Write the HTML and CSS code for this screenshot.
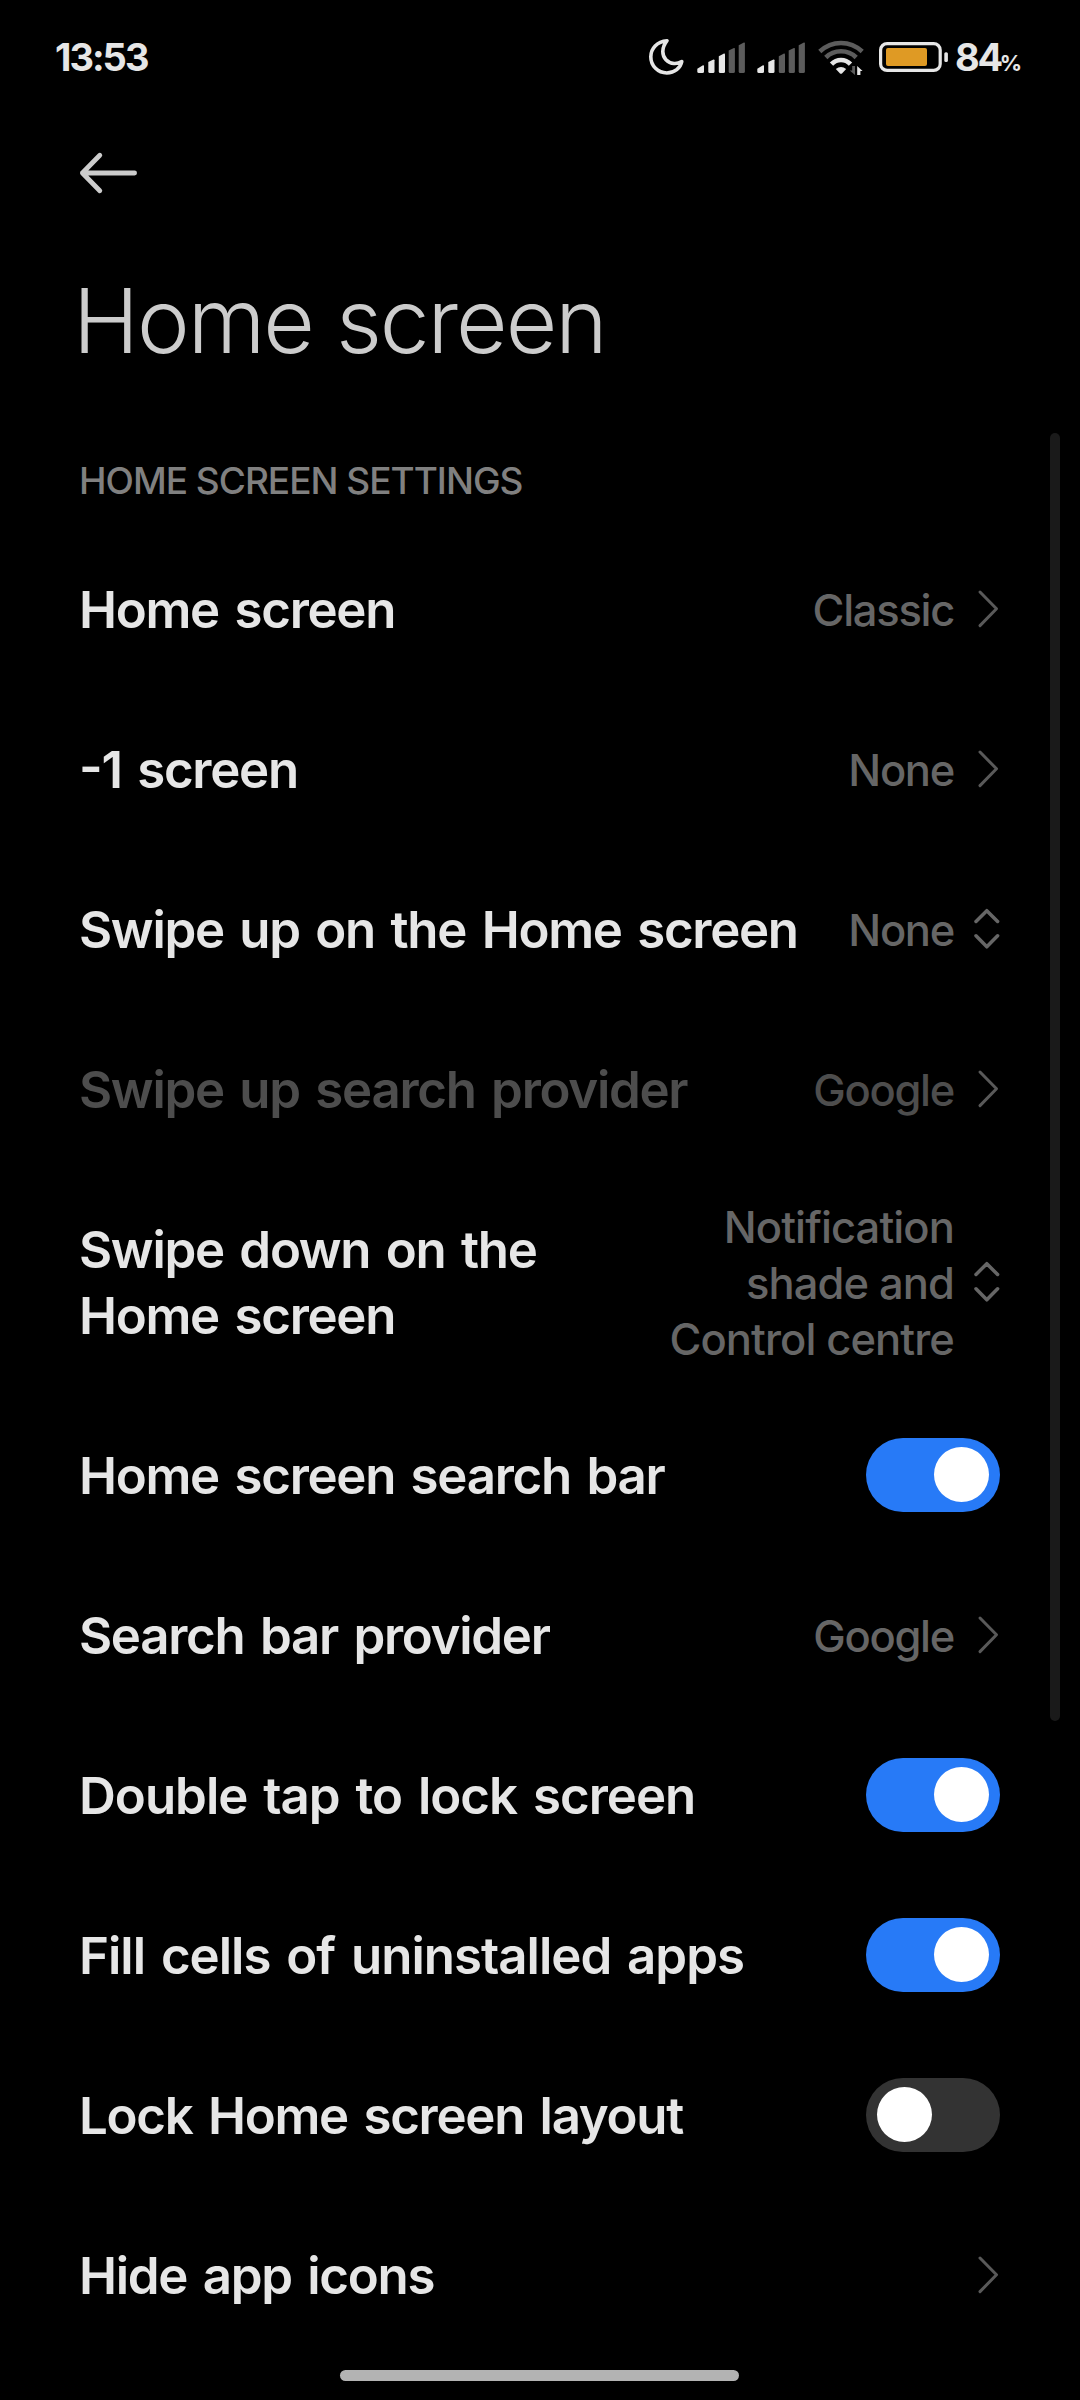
FILE: index.html
```html
<!DOCTYPE html>
<html lang="en">
<head>
    <meta charset="UTF-8">
    <meta name="viewport" content="width=device-width, initial-scale=1.0">
    <title>Home screen</title>
    <link rel="stylesheet" href="styles.css">
</head>
<body>
    <svg width="0" height="0" class="defs">
        <symbol id="chevron" viewBox="0 0 28 44">
            <path d="M8 5 L24.5 21.8 L8 38.6" fill="none" stroke="currentColor" stroke-width="3" stroke-linecap="round" stroke-linejoin="round"/>
        </symbol>
        <symbol id="updown" viewBox="0 0 28 44">
            <path d="M4 14.5 L14.8 3.7 L25.6 14.5 M4 28.8 L14.8 39.8 L25.6 28.8" fill="none" stroke="currentColor" stroke-width="3.5" stroke-linecap="round" stroke-linejoin="round"/>
        </symbol>
    </svg>

    <div class="status-bar">
        <span class="time">13:53</span>
        <!-- moon, two sims, wifi and battery -->
        <svg class="status-icons" width="304" height="40" viewBox="646 37 304 40">
            <path d="M667 40.7 C657 41.5 650.8 48.5 650.8 56.8 C650.8 66 658 73 666.8 73 C674.5 73 680.6 68 681.8 61.5 C679 63.2 676.5 63.7 674 63.5 C667.5 63 662.8 58 662.8 51.5 C662.8 47.3 664.5 44 667 40.7 Z" fill="none" stroke="#e6e6e6" stroke-width="3.6" stroke-linejoin="round"/>
            <g fill="#e6e6e6">
                <path d="M697.3 71.5 V68.8 L703 65.2 Q704 65 704 66 V71.5 Q704 73 702.5 73 H698.8 Q697.3 73 697.3 71.5 Z"/>
                <path d="M708.3 71.5 V62 L713.5 59.5 Q714.5 59.3 714.5 60.3 V71.5 Q714.5 73 713 73 H709.8 Q708.3 73 708.3 71.5 Z"/>
                <path d="M718.8 71.5 V56.2 L724 53.6 Q725 53.4 725 54.4 V71.5 Q725 73 723.5 73 H720.3 Q718.8 73 718.8 71.5 Z"/>
                <path d="M757.3 71.5 V68.8 L763 65.2 Q764 65 764 66 V71.5 Q764 73 762.5 73 H758.8 Q757.3 73 757.3 71.5 Z"/>
                <path d="M768.3 71.5 V62 L773.5 59.5 Q774.5 59.3 774.5 60.3 V71.5 Q774.5 73 773 73 H769.8 Q768.3 73 768.3 71.5 Z"/>
            </g>
            <g fill="#5c5c5c">
                <path d="M728.7 71.5 V50.6 L733.9 48 Q734.9 47.8 734.9 48.8 V71.5 Q734.9 73 733.4 73 H730.2 Q728.7 73 728.7 71.5 Z"/>
                <path d="M738.7 71.5 V45.2 L743.9 42.6 Q744.9 42.4 744.9 43.4 V71.5 Q744.9 73 743.4 73 H740.2 Q738.7 73 738.7 71.5 Z"/>
                <path d="M778.8 71.5 V56.2 L784 53.6 Q785 53.4 785 54.4 V71.5 Q785 73 783.5 73 H780.3 Q778.8 73 778.8 71.5 Z"/>
                <path d="M788.7 71.5 V50.6 L793.9 48 Q794.9 47.8 794.9 48.8 V71.5 Q794.9 73 793.4 73 H790.2 Q788.7 73 788.7 71.5 Z"/>
                <path d="M798.7 71.5 V45.2 L803.9 42.6 Q804.9 42.4 804.9 43.4 V71.5 Q804.9 73 803.4 73 H800.2 Q798.7 73 798.7 71.5 Z"/>
            </g>
            <g fill="none" stroke-width="4.6">
                <path d="M819.8 51.5 Q829 43 841 43 Q853 43 862.2 51.5" stroke="#5c5c5c"/>
                <path d="M825.8 57.5 Q832 51.3 841 51.3 Q850 51.3 856.2 57.5" stroke="#5c5c5c"/>
                <path d="M831.5 64.2 Q835.5 60 841 60 Q846.5 60 850.5 64.2" stroke="#e6e6e6"/>
            </g>
            <path d="M835.8 69 Q841 65 846.2 69 L842 73.4 Q841 74.3 840 73.4 Z" fill="#e6e6e6"/>
            <path d="M855 66 V75 L849.8 70.5 H852.2 V66 Z" fill="#5c5c5c"/>
            <path d="M857.2 75 V66 L862.6 71 H860.4 V75 Z" fill="#e6e6e6"/>
            <rect x="880.6" y="43.6" width="59.6" height="26.8" rx="6.5" fill="none" stroke="#e6e6e6" stroke-width="3.2"/>
            <rect x="886" y="48" width="41" height="18" rx="2" fill="#df9a24"/>
            <rect x="944.3" y="52.3" width="3.6" height="9.8" rx="1.5" fill="#e6e6e6"/>
        </svg>
        <span class="battery-level">84<span class="percent">%</span></span>
    </div>

    <div class="header">
        <svg width="62" height="44" viewBox="78 151.5 62 44">
            <path d="M99.8 155.8 L82.4 173.5 L99.8 191.2 M82.4 173.5 H134.6" fill="none" stroke="#cccccc" stroke-width="4.8" stroke-linecap="round" stroke-linejoin="round"/>
        </svg>
    </div>

    <h1>Home screen</h1>
    <h2>HOME SCREEN SETTINGS</h2>

    <div class="list">
        <div class="row">
            <span class="label">Home screen</span>
            <span class="value">Classic</span>
            <svg class="icon"><use href="#chevron"/></svg>
        </div>
        <div class="row">
            <span class="label minus">-1 screen</span>
            <span class="value">None</span>
            <svg class="icon"><use href="#chevron"/></svg>
        </div>
        <div class="row">
            <span class="label">Swipe up on the Home screen</span>
            <span class="value">None</span>
            <svg class="icon updown"><use href="#updown"/></svg>
        </div>
        <div class="row disabled">
            <span class="label">Swipe up search provider</span>
            <span class="value">Google</span>
            <svg class="icon"><use href="#chevron"/></svg>
        </div>
        <div class="row tall">
            <span class="label">Swipe down on the Home screen</span>
            <span class="value">Notification shade and Control centre</span>
            <svg class="icon updown"><use href="#updown"/></svg>
        </div>
        <div class="row">
            <span class="label">Home screen search bar</span>
            <span class="switch on"></span>
        </div>
        <div class="row">
            <span class="label">Search bar provider</span>
            <span class="value">Google</span>
            <svg class="icon"><use href="#chevron"/></svg>
        </div>
        <div class="row">
            <span class="label loose">Double tap to lock screen</span>
            <span class="switch on"></span>
        </div>
        <div class="row">
            <span class="label loose">Fill cells of uninstalled apps</span>
            <span class="switch on"></span>
        </div>
        <div class="row">
            <span class="label">Lock Home screen layout</span>
            <span class="switch"></span>
        </div>
        <div class="row">
            <span class="label">Hide app icons</span>
            <svg class="icon"><use href="#chevron"/></svg>
        </div>
    </div>

    <div class="scrollbar"></div>
    <div class="home-bar"></div>
</body>
</html>
```
FILE: styles.css
```css
body {
    position: relative;
    width: 1080px;
    height: 2400px;
    margin: 0;
    overflow: hidden;
    background: #000;
    color: #e6e6e6;
    font-family: Inter, "Noto Sans", sans-serif;
}
.defs {
    display: block;
}
.status-bar {
    display: flex;
    align-items: center;
    height: 114px;
    padding: 0 55px;
    font-size: 38px;
    font-weight: 650;
}
.time {
    letter-spacing: -2px;
}
.status-icons {
    margin-left: auto;
}
.battery-level {
    width: 70px;
    margin-left: 5px;
    letter-spacing: -2.3px;
    white-space: nowrap;
}
.percent {
    margin-left: -1px;
    font-size: 22px;
}
.header {
    display: flex;
    align-items: center;
    height: 117px;
    padding: 0 78px 2px;
}
h1 {
    height: 175px;
    margin: 0;
    padding-left: 73px;
    font-size: 89px;
    font-weight: 320;
    line-height: 175px;
    letter-spacing: -2px;
    color: #ccc;
}
h2 {
    margin: 0;
    padding: 24px 79px 0;
    font-size: 37px;
    font-weight: 480;
    line-height: 98px;
    letter-spacing: -1px;
    color: #808080;
}
.row {
    display: flex;
    align-items: center;
    height: 160px;
    padding: 0 80px 0 79px;
}
.row:first-child {
    margin-top: -1px;
}
.row.tall {
    height: 226px;
}
.label {
    flex: 1;
    padding-top: 2px;
    font-size: 51px;
    font-weight: 570;
    line-height: 66px;
    letter-spacing: -1.3px;
    word-spacing: 4px;
}
.label.loose {
    letter-spacing: -1px;
}
/* raised hyphen in front of the digit */
.label.minus {
    font-feature-settings: "case";
}
.value {
    max-width: 302px;
    padding-top: 1px;
    margin-right: 18px;
    font-size: 43.5px;
    font-weight: 470;
    line-height: 56px;
    letter-spacing: -1.3px;
    text-align: right;
    color: #666;
}
.tall .value {
    letter-spacing: -0.9px;
}
.icon {
    width: 28px;
    height: 44px;
    color: #595959;
}
.icon.updown {
    color: #666;
}
.disabled .label,
.disabled .value {
    color: #4d4d4d;
}
.switch {
    display: flex;
    box-sizing: border-box;
    width: 134px;
    height: 74px;
    padding: 9px 11px;
    border-radius: 37px;
    background: #333;
}
.switch.on {
    justify-content: flex-end;
    background: #277af7;
}
.switch::before {
    content: "";
    width: 55px;
    height: 55px;
    border-radius: 50%;
    background: #fff;
}
.scrollbar {
    position: absolute;
    top: 433px;
    right: 20px;
    width: 10px;
    height: 1288px;
    border-radius: 5px;
    background: #1a1a1a;
}
.home-bar {
    position: absolute;
    bottom: 19px;
    left: 340px;
    width: 399px;
    height: 11px;
    border-radius: 6px;
    background: #b3b3b3;
}
```
